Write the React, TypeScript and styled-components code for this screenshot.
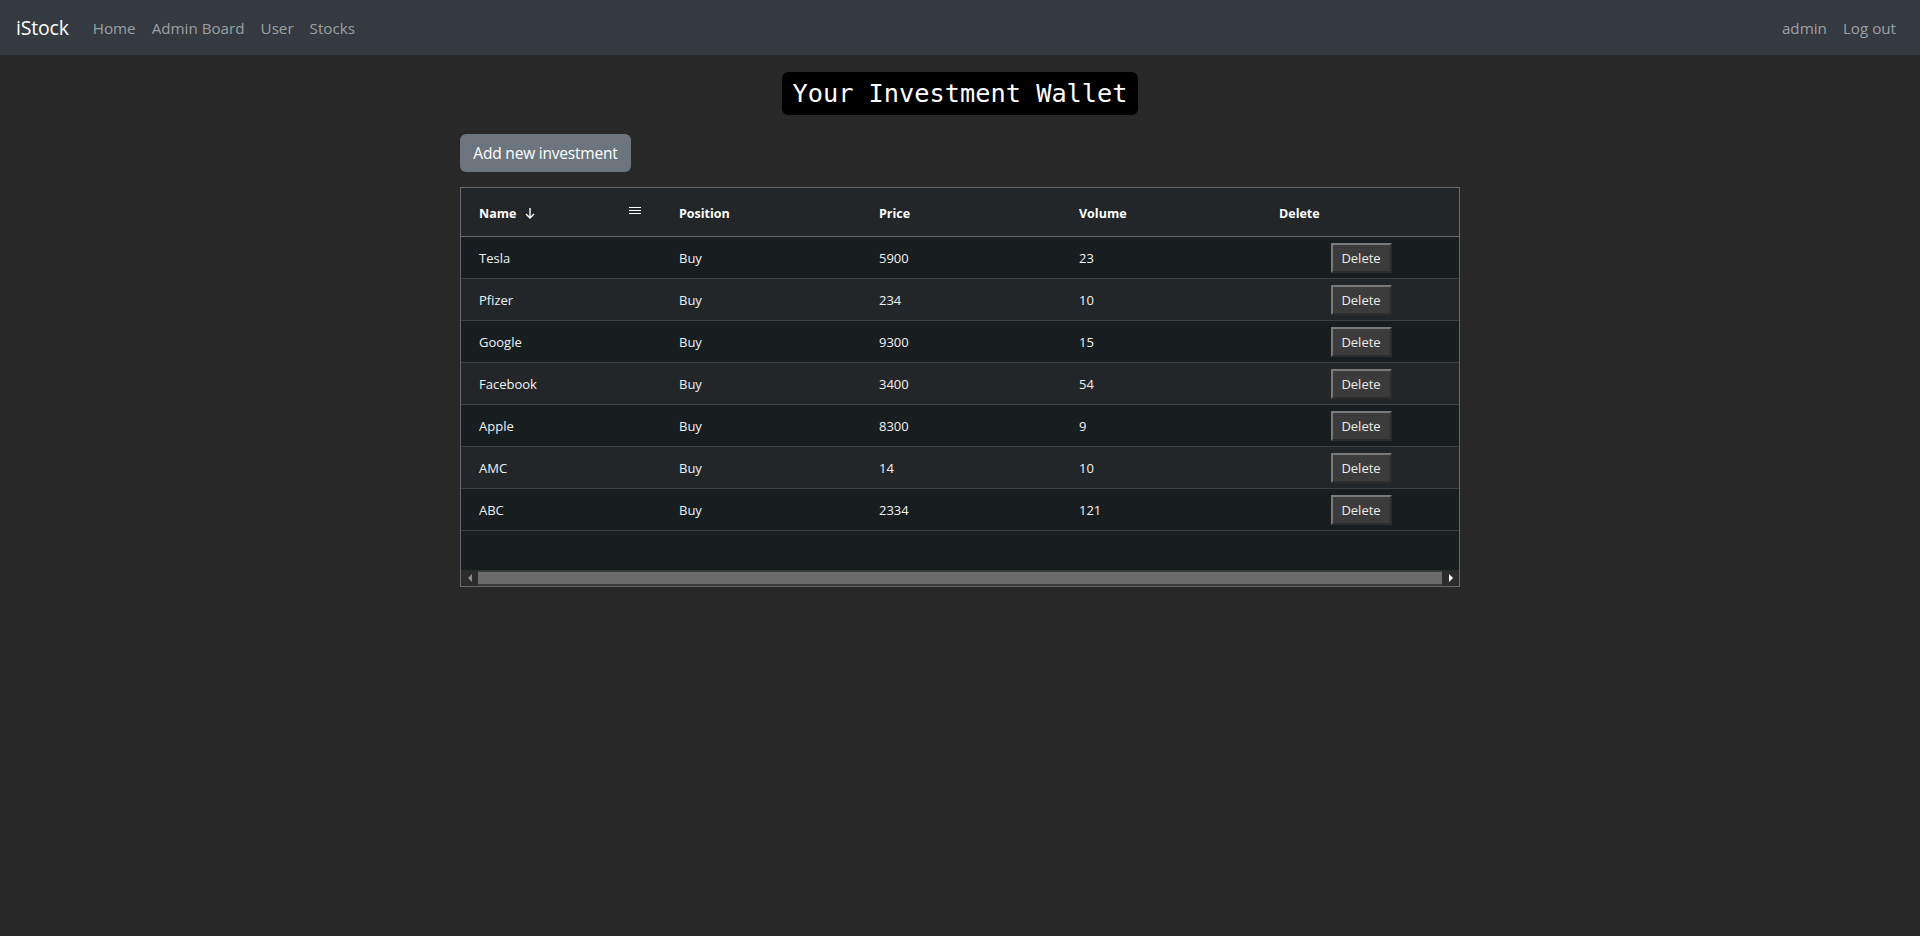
import React from "react";
import styled, { createGlobalStyle } from "styled-components";

const GlobalStyle = createGlobalStyle`
  html, body { margin: 0; padding: 0; }
  body {
    background: #282828;
    font-family: "Open Sans", "Noto Sans", sans-serif;
    color: #fff;
  }
`;

const Navbar = styled.nav`
  height: 55px;
  background: #343a40;
  display: flex;
  align-items: center;
  justify-content: space-between;
  padding: 0 16px;
  box-sizing: border-box;
`;

const NavGroup = styled.div`
  display: flex;
  align-items: center;
`;

const Brand = styled.a`
  font-size: 19.5px;
  color: #fff;
  margin-right: 16px;
  text-decoration: none;
  letter-spacing: -0.2px;
`;

const NavLink = styled.a`
  font-size: 15.2px;
  color: #9da0a3;
  padding: 0 8px;
  text-decoration: none;
`;

const Main = styled.main`
  width: 1000px;
  margin: 0 auto;
  display: flex;
  flex-direction: column;
  align-items: flex-start;
`;

const Title = styled.h3`
  align-self: center;
  margin: 17px 0 0;
  height: 43px;
  box-sizing: border-box;
  padding: 0 10px;
  display: flex;
  align-items: center;
  background: #000;
  border-radius: 6px;
  font-family: "DejaVu Sans Mono", "Liberation Mono", monospace;
  font-weight: 400;
  font-size: 25.3px;
  color: #fff;
`;

const AddButton = styled.button`
  margin-top: 19px;
  height: 38px;
  width: 171px;
  padding: 0;
  border: none;
  border-radius: 6px;
  background: #6c757d;
  color: #fff;
  font-family: "Open Sans", "Noto Sans", sans-serif;
  font-size: 15.5px;
  letter-spacing: -0.2px;
`;

const Grid = styled.div`
  margin-top: 15px;
  width: 1000px;
  height: 400px;
  box-sizing: border-box;
  border: 1px solid #68686e;
  background: #181d1f;
  display: flex;
  flex-direction: column;
  overflow: hidden;
  font-family: "Open Sans", "Noto Sans", sans-serif;
  font-size: 13px;
`;

const HeaderRow = styled.div`
  display: flex;
  height: 48px;
  flex: none;
  background: #222628;
  border-bottom: 1px solid #68686e;
`;

const HeaderCell = styled.div`
  width: 200px;
  flex: none;
  box-sizing: border-box;
  padding: 0 18px;
  display: flex;
  align-items: center;
  font-weight: 700;
  font-size: 12.5px;
  color: #fff;
  position: relative;
  padding-top: 2px;
`;

const SortIcon = styled.svg`
  margin-left: 8px;
  width: 12px;
  height: 12px;
`;

const MenuIcon = styled.svg`
  position: absolute;
  left: 168px;
  top: 19px;
  width: 12px;
  height: 8px;
`;

const Body = styled.div`
  flex: 1;
`;

const Row = styled.div<{ $odd: boolean }>`
  display: flex;
  height: 42px;
  box-sizing: border-box;
  border-bottom: 1px solid #3c4042;
  background: ${(p) => (p.$odd ? "#222628" : "#181d1f")};
`;

const Cell = styled.div<{ $center?: boolean }>`
  width: 200px;
  flex: none;
  box-sizing: border-box;
  padding: 1px 18px 0;
  display: flex;
  align-items: center;
  justify-content: ${(p) => (p.$center ? "center" : "flex-start")};
  color: #f2f2f2;
`;

const DeleteButton = styled.button`
  width: 61px;
  height: 30px;
  box-sizing: border-box;
  background: #3b3b3b;
  color: #ececec;
  border-style: solid;
  border-width: 2px;
  border-color: #7a7a7a #2c2c2c #2c2c2c #7a7a7a;
  font-family: "Open Sans", "Noto Sans", sans-serif;
  font-size: 13px;
  padding: 0;
`;

const Scrollbar = styled.div`
  height: 16px;
  flex: none;
  display: flex;
  align-items: stretch;
  background: #2c2c2c;
`;

const ScrollArrow = styled.div<{ $dir: "left" | "right"; $active?: boolean }>`
  width: 17px;
  display: flex;
  align-items: center;
  justify-content: center;
  &::before {
    content: "";
    width: 0;
    height: 0;
    border-top: 4px solid transparent;
    border-bottom: 4px solid transparent;
    ${(p) =>
      p.$dir === "left"
        ? `border-right: 4px solid ${p.$active ? "#fff" : "#8a8a8a"};`
        : `border-left: 4px solid ${p.$active ? "#fff" : "#8a8a8a"};`}
  }
`;

const Track = styled.div`
  flex: 1;
  display: flex;
  align-items: center;
  padding: 2px 0;
  background: #3a3a3a;
`;

const Thumb = styled.div`
  flex: 1;
  height: 100%;
  background: #6b6b6b;
`;

const data = [
  { name: "Tesla", position: "Buy", price: 5900, volume: 23 },
  { name: "Pfizer", position: "Buy", price: 234, volume: 10 },
  { name: "Google", position: "Buy", price: 9300, volume: 15 },
  { name: "Facebook", position: "Buy", price: 3400, volume: 54 },
  { name: "Apple", position: "Buy", price: 8300, volume: 9 },
  { name: "AMC", position: "Buy", price: 14, volume: 10 },
  { name: "ABC", position: "Buy", price: 2334, volume: 121 },
];

export default function App() {
  return (
    <>
      <GlobalStyle />
      <Navbar>
        <NavGroup>
          <Brand>iStock</Brand>
          <NavLink>Home</NavLink>
          <NavLink>Admin Board</NavLink>
          <NavLink>User</NavLink>
          <NavLink>Stocks</NavLink>
        </NavGroup>
        <NavGroup>
          <NavLink>admin</NavLink>
          <NavLink>Log out</NavLink>
        </NavGroup>
      </Navbar>
      <Main>
        <Title>Your Investment Wallet</Title>
        <AddButton>Add new investment</AddButton>
        <Grid>
          <HeaderRow>
            <HeaderCell>
              Name
              <SortIcon viewBox="0 0 12 12" fill="none" stroke="#fff" strokeWidth="1.4">
                <path d="M6 1v10M2 7l4 4 4-4" />
              </SortIcon>
              <MenuIcon viewBox="0 0 12 8" stroke="#fff" strokeWidth="1">
                <path d="M0 0.5h12M0 3.5h12M0 6.5h12" />
              </MenuIcon>
            </HeaderCell>
            <HeaderCell>Position</HeaderCell>
            <HeaderCell>Price</HeaderCell>
            <HeaderCell>Volume</HeaderCell>
            <HeaderCell>Delete</HeaderCell>
          </HeaderRow>
          <Body>
            {data.map((r, i) => (
              <Row key={r.name} $odd={i % 2 === 1}>
                <Cell>{r.name}</Cell>
                <Cell>{r.position}</Cell>
                <Cell>{r.price}</Cell>
                <Cell>{r.volume}</Cell>
                <Cell $center>
                  <DeleteButton>Delete</DeleteButton>
                </Cell>
              </Row>
            ))}
          </Body>
          <Scrollbar>
            <ScrollArrow $dir="left" />
            <Track>
              <Thumb />
            </Track>
            <ScrollArrow $dir="right" $active />
          </Scrollbar>
        </Grid>
      </Main>
    </>
  );
}
